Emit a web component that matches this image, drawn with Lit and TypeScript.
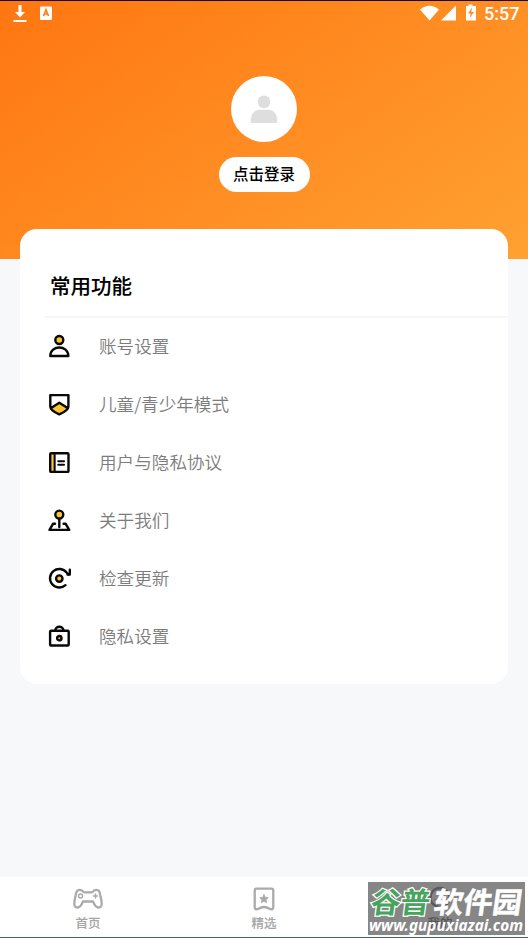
import { LitElement, html, css, svg } from "lit";
import { customElement } from "lit/decorators.js";

const rows = [
  { label: "账号设置", icon: svg`<circle class="y" cx="13.3" cy="6" r="4"/><path d="M4.3 22C4.3 10.700 22.300 10.700 22.300 22Z"/>` },
  { label: "儿童/青少年模式", icon: svg`<path class="f" d="M4.800 16L13.300 10.500L21.900 16Q19 20 13.300 22Q7.500 20 4.800 16Z"/><path d="M4.300 3.100H22.400V14.500C22.400 18 17.500 20.500 13.300 22.300C9 20.500 4.300 18 4.300 14.500ZM5.500 15.800L13.300 10.700L21.200 15.800"/>` },
  { label: "用户与隐私协议", icon: svg`<path class="f" d="M4.500 4H7.500V21H4.500Z"/><rect x="4.200" y="3.300" width="18.300" height="18.600" rx="1"/><path d="M8.600 3.500V22M12.300 11.300H18M12.300 14.700H18" stroke-width="2.100"/>` },
  { label: "关于我们", icon: svg`<circle class="y" cx="13.300" cy="6.600" r="4"/><path d="M13.300 10.500V19M9 15.800H7L3.500 21.900H23.200L19.700 15.800H17.600"/>` },
  { label: "检查更新", icon: svg`<path d="M19.500 19.200A9.300 9.300 0 1 1 20.600 6.500L22.500 8.500"/><path d="M23.800 3.800V8.500H21.500"/><circle class="y" cx="13.300" cy="12.600" r="3.200"/>` },
  { label: "隐私设置", icon: svg`<rect x="4.100" y="6.700" width="18.600" height="14.800" rx="1"/><path d="M9.300 6.500C9.300 1.500 17.400 1.500 17.400 6.500"/><circle class="y" cx="13.300" cy="14.200" r="2.200"/>` },
];

@customElement("app-root")
export class AppRoot extends LitElement {
  static styles = css`
    :host { display: block; height: 938px; overflow: hidden; background: #f7f8fa; position: relative;
      font-family: "Noto Sans CJK SC", sans-serif; box-sizing: border-box; }
    .page { height: 938px; display: flex; flex-direction: column; }
    .hero { height: 259px; flex: none; box-sizing: border-box; border-top: 1px solid #15100c;
      background: linear-gradient(145deg, #ff7611, #ffa132);
      display: flex; flex-direction: column; align-items: center; }
    .status { align-self: stretch; height: 26px; display: flex; justify-content: space-between; }
    .status svg { display: block; }
    .right { display: flex; }
    .time { color: #fff; font: 500 18px/25px Roboto, sans-serif; width: 44px; }
    .avatar { width: 66px; height: 66px; margin-top: 49px; border-radius: 50%; background: #fff; }
    .login { margin-top: 15px; width: 91px; height: 35px; border-radius: 18px; background: #fff;
      color: #000; font-size: 15.500px; font-weight: 500; line-height: 33px; text-align: center; }
    .card { margin: -30px 20px 0; height: 455px; flex: none; background: #fff; border-radius: 17px; }
    h2 { margin: 0 0 0 25px; padding-left: 5px; height: 89px; box-sizing: border-box; padding-top: 41px;
      font-size: 20.500px; line-height: 30px; font-weight: 500; -webkit-text-stroke: .1px #000; color: #000; border-bottom: 2px solid #f6f6f7; }
    .row { height: 58px; display: flex; align-items: center; padding-left: 26px; }
    .row svg { width: 26px; height: 26px; margin-right: 27px; fill: none; stroke: #080808; stroke-width: 2.400; stroke-linejoin: round; stroke-linecap: round; }
    .row .y { fill: #fcc52c; }
    .row .f { fill: #fcc52c; stroke: none; }
    .row span { font-size: 17.600px; font-weight: 350; color: #7c7c7c; line-height: 26px; margin-bottom: 2px; }
    .nav { margin-top: auto; height: 61px; flex: none; box-sizing: border-box; background: #fff; border-bottom: 1px solid #3f6b59;
      display: grid; grid-template-columns: repeat(3, 1fr); }
    .tab { display: flex; flex-direction: column; align-items: center; padding-top: 9px; color: #a6a6a6;
      font-size: 12.500px; font-weight: 500; -webkit-text-stroke: .1px currentColor; line-height: 18px; }
    .tab svg { width: 32px; height: 26px; margin-bottom: 2px; fill: none; stroke: #aaa; stroke-width: 2.300; stroke-linejoin: round; stroke-linecap: round; }
    .mine { color: #333; }
    .mine svg { stroke: #444; }
    .mark { position: absolute; left: 368px; top: 882px; width: 157px; height: 53px; background: rgba(96,96,96,.76); }
    .mark svg { display: block; }
    .brand { font-family: "Noto Sans CJK SC", sans-serif; font-weight: 700; font-size: 29px; fill: #fff; }
    .white { stroke: #fff; stroke-width: .5; }
    .green { fill: #46a45c; stroke: #fff; stroke-width: 2.500; paint-order: stroke; }
    .url { font-family: "Noto Sans", sans-serif; font-weight: 700; font-style: italic; font-size: 16px; fill: #fff; }
  `;

  render() {
    return html`<div class="page">
      <header class="hero">
        <div class="status">
          <svg width="60" height="26" viewBox="0 1 60 26" fill="#fff"><path d="M18.500 5h3v7h3.500l-5 5.500-5-5.500h3.500ZM13.500 20h13V22H13.500Z"/><rect x="40" y="6.500" width="12" height="13.500" rx="1"/><path d="M43.500 16L46 9.800 48.500 16M44.500 14h3" fill="none" stroke="#ff8020" stroke-width="1.700"/></svg>
          <div class="right"><svg width="64" height="26" viewBox="420 1 64 26" fill="#fff"><path d="M420 9.500Q429.500 2 439 9.500L429.500 20.500ZM441 20.500L456 5.500V20.500Z"/><path d="M466 6h2.500V4.500h4V6H476V20.500H466Z"/><path d="M472 7.500L468 13.500H470.500L469.700 18L474 12H471.300Z" fill="#ff8c24"/></svg><span class="time">5:57</span></div>
        </div>
        <div class="avatar"><svg width="66" height="66" fill="#dedede"><circle cx="33" cy="25.700" r="6.300"/><path d="M19.700 45.500C19.700 37 24 33.700 29 33.700H37C42 33.700 46.300 37 46.300 45.500Q46.300 47 44.800 47H21.200Q19.700 47 19.700 45.500Z"/></svg></div>
        <div class="login">点击登录</div>
      </header>
      <main class="card"><h2>常用功能</h2>
        ${rows.map((r) => html`<div class="row"><svg viewBox="0 0 26 26">${r.icon}</svg><span>${r.label}</span></div>`)}
      </main>
      <nav class="nav">
        <div class="tab"><svg viewBox="0 0 32 26"><path d="M10 4.500Q11 6.300 12.500 6.300H19.500Q21 6.300 22 4.500C27 2.500 28 6 28.500 10C29.500 15 30.700 18 29 20.500C27 22.500 24 21.500 22.500 18.500L21 15.500H11L9.500 18.500C8 21.500 5 22.500 3 20.500C1.300 18 2.500 15 3.500 10C4 6 5 2.500 10 4.500Z"/><circle cx="8.500" cy="10" r="2" stroke-width="1.500"/><path d="M21.500 10h4M23.500 8v4" stroke-width="1.500"/></svg>首页</div>
        <div class="tab"><svg viewBox="0 0 32 26"><path d="M8.500 2.700H23.500Q25.300 2.700 25.300 4.500V21Q25.300 24.500 21.500 22.800C18 20.500 14 20.500 10.500 22.800Q6.700 24.500 6.700 21V4.500Q6.700 2.700 8.500 2.700Z"/><path d="M16 8.500l1.300 2.800 3 .4-2.200 2.100.6 3-2.700-1.500-2.700 1.500.6-3-2.200-2.100 3-.4Z" fill="#aaa" stroke-width=".7"/></svg>精选</div>
        <div class="tab mine"><svg viewBox="0 0 32 26"><circle cx="16" cy="11.500" r="9.500"/><path d="M11 14Q16 18 21 14" stroke="#ff7a1a"/></svg>我的</div>
      </nav>
    </div>
    <div class="mark"><svg width="157" height="53"><g transform="skewX(-8)"><text class="brand green" x="6" y="31" textLength="59" lengthAdjust="spacingAndGlyphs">谷普</text><text class="brand white" x="69" y="31" textLength="88" lengthAdjust="spacingAndGlyphs">软件园</text></g><text class="url" x="1" y="49" textLength="154" lengthAdjust="spacingAndGlyphs">www.gupuxiazai.com</text></svg></div>`;
  }
}
